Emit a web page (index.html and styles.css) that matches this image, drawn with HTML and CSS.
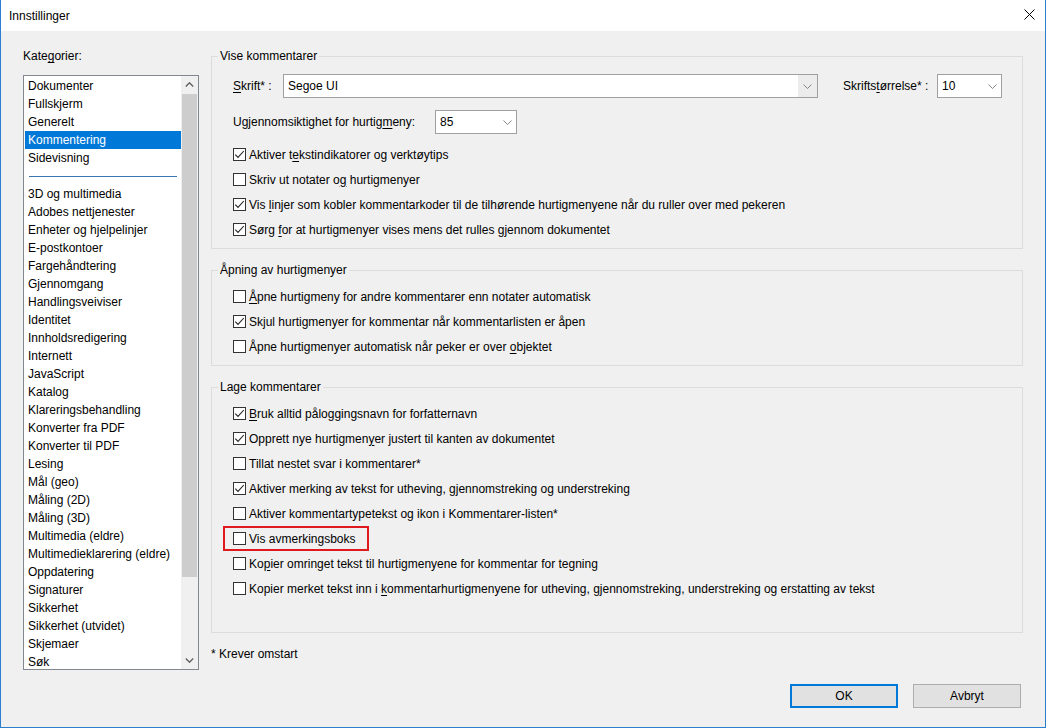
FILE: index.html
```html
<!DOCTYPE html>
<html lang="no">
<head>
<meta charset="utf-8">
<title>Innstillinger</title>
<link rel="stylesheet" href="styles.css">
</head>
<body>
<div class="window">
  <div class="titlebar">
    <span class="title">Innstillinger</span>
    <svg class="close" width="11" height="11" viewBox="0 0 11 11"><path d="M0.5 0.5 L10.5 10.5 M10.5 0.5 L0.5 10.5" stroke="#000" stroke-width="1" fill="none"/></svg>
  </div>
  <div class="client">
    <div class="main">
      <div class="left">
        <div class="cat-label">Kate<u>g</u>orier:</div>
        <div class="listbox">
          <div class="items">
            <div class="item">Dokumenter</div>
            <div class="item">Fullskjerm</div>
            <div class="item">Generelt</div>
            <div class="item sel">Kommentering</div>
            <div class="item">Sidevisning</div>
            <div class="sep"></div>
            <div class="item">3D og multimedia</div>
            <div class="item">Adobes nettjenester</div>
            <div class="item">Enheter og hjelpelinjer</div>
            <div class="item">E-postkontoer</div>
            <div class="item">Fargehåndtering</div>
            <div class="item">Gjennomgang</div>
            <div class="item">Handlingsveiviser</div>
            <div class="item">Identitet</div>
            <div class="item">Innholdsredigering</div>
            <div class="item">Internett</div>
            <div class="item">JavaScript</div>
            <div class="item">Katalog</div>
            <div class="item">Klareringsbehandling</div>
            <div class="item">Konverter fra PDF</div>
            <div class="item">Konverter til PDF</div>
            <div class="item">Lesing</div>
            <div class="item">Mål (geo)</div>
            <div class="item">Måling (2D)</div>
            <div class="item">Måling (3D)</div>
            <div class="item">Multimedia (eldre)</div>
            <div class="item">Multimedieklarering (eldre)</div>
            <div class="item">Oppdatering</div>
            <div class="item">Signaturer</div>
            <div class="item">Sikkerhet</div>
            <div class="item">Sikkerhet (utvidet)</div>
            <div class="item">Skjemaer</div>
            <div class="item">Søk</div>
          </div>
          <div class="vscroll">
            <div class="sbtn"><svg width="9" height="5" viewBox="0 0 9 5"><path d="M0.8 4.4 L4.5 0.8 L8.2 4.4" stroke="#606060" stroke-width="1.4" fill="none"/></svg></div>
            <div class="thumb"></div>
            <div class="strack"></div>
            <div class="sbtn"><svg width="9" height="5" viewBox="0 0 9 5"><path d="M0.8 0.6 L4.5 4.2 L8.2 0.6" stroke="#606060" stroke-width="1.4" fill="none"/></svg></div>
          </div>
        </div>
      </div>
      <div class="right">
        <div class="group g1">
          <div class="gtitle">Vise kommentarer</div>
          <div class="frow r1">
            <span class="lbl l-skrift"><u>S</u>krift* :</span>
            <div class="combo c-font">
              <span class="ctext">Segoe UI</span>
              <span class="cbtn gray"><svg width="9" height="5" viewBox="0 0 9 5"><path d="M0.5 0.5 L4.5 4.5 L8.5 0.5" stroke="#858585" stroke-width="1" fill="none"/></svg></span>
            </div>
            <span class="lbl l-size">Skrifts<u>t</u>ørrelse* :</span>
            <div class="combo c-size">
              <span class="ctext">10</span>
              <span class="cbtn"><svg width="9" height="5" viewBox="0 0 9 5"><path d="M0.5 0.5 L4.5 4.5 L8.5 0.5" stroke="#858585" stroke-width="1" fill="none"/></svg></span>
            </div>
          </div>
          <div class="frow r2">
            <span class="lbl l-opac">Ugjennomsiktighet for hurtig<u>m</u>eny:</span>
            <div class="combo c-opac">
              <span class="ctext">85</span>
              <span class="cbtn"><svg width="9" height="5" viewBox="0 0 9 5"><path d="M0.5 0.5 L4.5 4.5 L8.5 0.5" stroke="#858585" stroke-width="1" fill="none"/></svg></span>
            </div>
          </div>
          <div class="checks c1">
            <div class="cbrow"><span class="cb on"><svg width="11" height="11" viewBox="0 0 11 11"><path d="M1.3 5.6 L4 8.4 L9.8 2" stroke="#222" stroke-width="1.1" fill="none"/></svg></span><span>Aktiver t<u>e</u>kstindikatorer og verktøytips</span></div>
            <div class="cbrow"><span class="cb"></span><span>Skriv ut notater o<u>g</u> hurtigmenyer</span></div>
            <div class="cbrow"><span class="cb on"><svg width="11" height="11" viewBox="0 0 11 11"><path d="M1.3 5.6 L4 8.4 L9.8 2" stroke="#222" stroke-width="1.1" fill="none"/></svg></span><span>Vis <u>l</u>injer som kobler kommentarkoder til de tilhørende hurtigmenyene når du ruller over med pekeren</span></div>
            <div class="cbrow"><span class="cb on"><svg width="11" height="11" viewBox="0 0 11 11"><path d="M1.3 5.6 L4 8.4 L9.8 2" stroke="#222" stroke-width="1.1" fill="none"/></svg></span><span>Sørg <u>f</u>or at hurtigmenyer vises mens det rulles gjennom dokumentet</span></div>
          </div>
        </div>
        <div class="group g2">
          <div class="gtitle">Åpning av hurtigmenyer</div>
          <div class="checks c2">
            <div class="cbrow"><span class="cb"></span><span><u>Å</u>pne hurtigmeny for andre kommentarer enn notater automatisk</span></div>
            <div class="cbrow"><span class="cb on"><svg width="11" height="11" viewBox="0 0 11 11"><path d="M1.3 5.6 L4 8.4 L9.8 2" stroke="#222" stroke-width="1.1" fill="none"/></svg></span><span>Skjul hurtigmenyer for kommentar når kommentarlisten er åpen</span></div>
            <div class="cbrow"><span class="cb"></span><span>Åpne hurtigmenyer automatisk når peker er over <u>o</u>bjektet</span></div>
          </div>
        </div>
        <div class="group g3">
          <div class="gtitle">Lage kommentarer</div>
          <div class="checks c3">
            <div class="cbrow"><span class="cb on"><svg width="11" height="11" viewBox="0 0 11 11"><path d="M1.3 5.6 L4 8.4 L9.8 2" stroke="#222" stroke-width="1.1" fill="none"/></svg></span><span><u>B</u>ruk alltid påloggingsnavn for forfatternavn</span></div>
            <div class="cbrow"><span class="cb on"><svg width="11" height="11" viewBox="0 0 11 11"><path d="M1.3 5.6 L4 8.4 L9.8 2" stroke="#222" stroke-width="1.1" fill="none"/></svg></span><span>Opprett nye hurtigmen<u>y</u>er justert til kanten av dokumentet</span></div>
            <div class="cbrow"><span class="cb"></span><span>Tillat nestet svar i kommentarer*</span></div>
            <div class="cbrow"><span class="cb on"><svg width="11" height="11" viewBox="0 0 11 11"><path d="M1.3 5.6 L4 8.4 L9.8 2" stroke="#222" stroke-width="1.1" fill="none"/></svg></span><span>Aktiver merking av tekst for utheving, gjennomstreking og understreking</span></div>
            <div class="cbrow"><span class="cb"></span><span>Aktiver kommentartypetekst og ikon i Kommentarer-listen*</span></div>
            <div class="cbrow"><span class="cb"></span><span>Vis avmerkingsboks</span><span class="hl"></span></div>
            <div class="cbrow"><span class="cb"></span><span>Ko<u>p</u>ier omringet tekst til hurtigmenyene for kommentar for tegning</span></div>
            <div class="cbrow"><span class="cb"></span><span>Kopier merket tekst inn i <u>k</u>ommentarhurtigmenyene for utheving, gjennomstreking, understreking og erstatting av tekst</span></div>
          </div>
        </div>
        <div class="note">* Krever omstart</div>
      </div>
    </div>
    <div class="buttons">
      <button class="btn default">OK</button>
      <button class="btn">Avbryt</button>
    </div>
  </div>
</div>
</body>
</html>
```

FILE: styles.css
```css
* { box-sizing: border-box; }
html, body { margin: 0; padding: 0; }
body {
  width: 1046px;
  height: 728px;
  overflow: hidden;
  font-family: "Segoe UI", "Liberation Sans", Arial, sans-serif;
  font-size: 12px;
  color: #000;
  background: #fff;
}
u { text-decoration: underline; text-underline-offset: 2px; text-decoration-thickness: 1px; }

.window {
  width: 1046px;
  height: 728px;
  border: 1px solid #2b7fcf;
  border-top: none;
  display: flex;
  flex-direction: column;
  background: #f0f0f0;
}
.titlebar {
  height: 31px;
  flex: none;
  background: #fff;
  display: flex;
  align-items: center;
  justify-content: space-between;
  padding: 0 10px 0 8px;
}
.title { line-height: 16px; }
.close { display: block; margin-top: -2px; }

.client {
  flex: 1;
  display: flex;
  flex-direction: column;
  padding: 17px 22px 0 22px;
}
.main { display: flex; gap: 12px; }
.left { width: 176px; flex: none; }
.cat-label { height: 16px; line-height: 16px; margin-bottom: 11px; }
.listbox {
  height: 595px;
  border: 1px solid #828790;
  background: #fff;
  display: flex;
  overflow: hidden;
}
.items { flex: 1; min-width: 0; padding: 1px 0 0 1px; overflow: hidden; }
.item { height: 18px; line-height: 18px; padding-left: 3px; white-space: nowrap; }
.item.sel { background: #0078d7; color: #fff; }
.sep { height: 18px; display: flex; align-items: center; }
.sep::after { content: ""; display: block; width: 148px; height: 1px; margin-left: 4px; background: #3b76b0; }
.vscroll { width: 17px; flex: none; background: #f0f0f0; display: flex; flex-direction: column; }
.sbtn { height: 17px; flex: none; display: flex; align-items: center; justify-content: center; }
.sbtn svg { display: block; }
.thumb { height: 483px; flex: none; margin: 1px 1px 0; background: #cdcdcd; }
.strack { flex: 1; }

.right { flex: 1; min-width: 0; margin-top: 8px; }
.group { border: 1px solid #dcdcdc; padding: 0 0 6px 21px; }
.g2, .g3 { margin-top: 21px; }
.g3 { padding-bottom: 31px; }
.gtitle {
  display: block;
  width: max-content;
  height: 16px;
  line-height: 16px;
  margin: -9px 0 0 -15px;
  padding: 0 2px;
  background: #f0f0f0;
}
.frow { display: flex; align-items: center; height: 24px; }
.r1 { margin-top: 10px; }
.r2 { margin-top: 12px; }
.lbl { white-space: nowrap; flex: none; }
.l-skrift { width: 50px; }
.l-size { width: 94px; margin-left: 25px; }
.l-opac { width: 202px; }
.combo { display: flex; height: 24px; border: 1px solid #a0a0a0; background: #fff; flex: none; }
.c-font { width: 535px; }
.c-size { width: 65px; }
.c-opac { width: 82px; }
.ctext { flex: 1; padding-left: 4px; line-height: 22px; white-space: nowrap; }
.cbtn { width: 18px; flex: none; display: flex; align-items: center; justify-content: center; }
.cbtn svg { display: block; }
.cbtn.gray { width: 19px; background: #ececec; }

.c1 { margin-top: 8px; }
.c2, .c3 { margin-top: 6px; }
.cbrow { position: relative; height: 25px; display: flex; align-items: center; white-space: nowrap; }
.cb {
  width: 13px;
  height: 13px;
  flex: none;
  margin-right: 3px;
  border: 1px solid #333;
  background: #fff;
}
.cb svg { display: block; }
.hl {
  position: absolute;
  left: -10px;
  top: 0;
  width: 146px;
  height: 25px;
  border: 2px solid #e0191f;
}
.note { margin-top: 13px; height: 16px; line-height: 16px; }

.buttons { display: flex; justify-content: flex-end; gap: 15px; margin-top: 14px; padding-right: 2px; }
.btn {
  width: 108px;
  height: 24px;
  margin: 0;
  padding: 0;
  font: inherit;
  color: #000;
  background: #e1e1e1;
  border: 1px solid #adadad;
}
.btn.default { border: 2px solid #0078d7; }
```
